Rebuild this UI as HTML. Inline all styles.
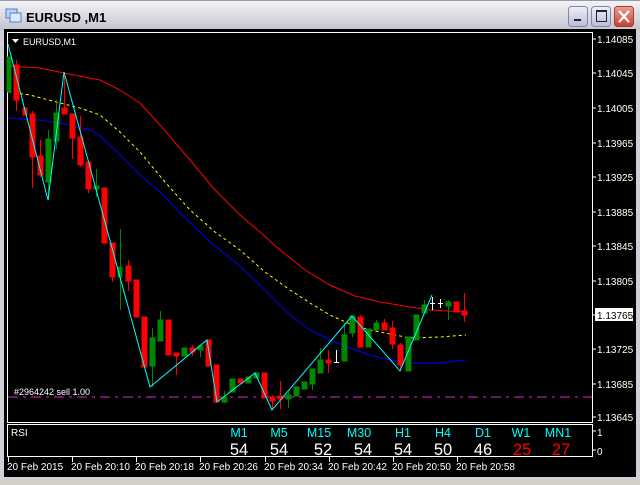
<!DOCTYPE html>
<html><head><meta charset="utf-8"><style>
body{margin:0;width:640px;height:480px;overflow:hidden;background:#d4d0c8;font-family:"Liberation Sans",sans-serif}
</style></head><body>
<svg width="640" height="480" viewBox="0 0 640 480" xmlns="http://www.w3.org/2000/svg" font-family="Liberation Sans, sans-serif">
<defs>
<linearGradient id="tb" x1="0" y1="0" x2="0" y2="1"><stop offset="0" stop-color="#f4f4f8"/><stop offset="0.5" stop-color="#dcdce4"/><stop offset="1" stop-color="#c4c4d0"/></linearGradient>
<linearGradient id="bt" x1="0" y1="0" x2="0" y2="1"><stop offset="0" stop-color="#f0f0f8"/><stop offset="1" stop-color="#b8bcd4"/></linearGradient>
<linearGradient id="cl" x1="0" y1="0" x2="0" y2="1"><stop offset="0" stop-color="#f0a090"/><stop offset="1" stop-color="#c84030"/></linearGradient>
</defs>
<rect x="0" y="0" width="640" height="480" fill="#cfcfd8"/>
<rect x="0" y="0" width="640" height="30" fill="url(#tb)"/>
<rect x="0" y="0" width="640" height="1" fill="#9898a8"/>
<rect x="6" y="9" width="11" height="9" fill="#bcd4f4" stroke="#5080c0"/>
<rect x="10" y="13" width="11" height="9" fill="#dce8fc" stroke="#5080c0"/>
<text x="26" y="22" font-size="13" font-weight="bold" fill="#000">EURUSD ,M1</text>
<rect x="568.5" y="6.5" width="19" height="20" rx="3" fill="url(#bt)" stroke="#8088a8"/>
<rect x="574" y="19" width="7" height="2" fill="#202040"/>
<rect x="591.5" y="6.5" width="19" height="20" rx="3" fill="url(#bt)" stroke="#8088a8"/>
<rect x="596.5" y="10.5" width="10" height="11" fill="none" stroke="#202040"/><rect x="596" y="10" width="11" height="2" fill="#202040"/>
<rect x="614.5" y="6.5" width="19" height="20" rx="3" fill="url(#cl)" stroke="#a04038"/>
<path d="M619 11 L629 22 M629 11 L619 22" stroke="#fff" stroke-width="2.2"/>
<rect x="4" y="29" width="632" height="448" fill="#000"/>
<rect x="7.5" y="32.5" width="585" height="390" fill="none" stroke="#fff"/>
<rect x="7.5" y="424.5" width="585" height="32" fill="none" stroke="#fff"/>
<g fill="#fff" font-size="10">
<text x="597" y="43">1.14085</text><text x="597" y="77">1.14045</text><text x="597" y="112">1.14005</text><text x="597" y="147">1.13965</text><text x="597" y="181">1.13925</text><text x="597" y="216">1.13885</text><text x="597" y="250">1.13845</text><text x="597" y="285">1.13805</text><text x="597" y="353">1.13725</text><text x="597" y="388">1.13685</text><text x="597" y="421">1.13645</text>
<text x="597" y="436">1</text><text x="597" y="455">0</text>
</g>
<g stroke="#fff"><path d="M593 39h3M593 73h3M593 108h3M593 143h3M593 177h3M593 212h3M593 246h3M593 281h3M593 315h3M593 349h3M593 384h3M593 417h3M593 431h3M593 450h3"/></g>
<rect x="595" y="308" width="38" height="13" fill="#fff"/><text x="597" y="319" font-size="10" fill="#000">1.13765</text>
<polyline fill="none" stroke="#f00" points="8,66 40,68 64,73 100,80 120,90 140,103 160,125 190,160 215,190 240,215 260,232 280,250 305,270 330,285 355,296 380,302 410,307 430,310 466,312"/>
<polyline fill="none" stroke="#ff0" stroke-dasharray="3,3" points="8,92 30,95 60,103 80,108 100,115 120,132 140,152 165,182 190,210 215,232 240,250 265,272 290,290 310,303 330,315 350,324 370,330 390,334 410,338 440,337 466,335"/>
<polyline fill="none" stroke="#00f" points="8,118 40,120 70,125 90,130 100,136 115,150 140,175 160,192 180,213 210,242 240,266 265,290 290,315 310,330 330,340 350,348 370,355 390,360 410,363 440,363 466,360"/>
<line x1="8" y1="397" x2="592" y2="397" stroke="#e020e0" stroke-dasharray="10,5,3,5"/>
<text x="14" y="395" font-size="9" fill="#fff">#2964242 sell 1.00</text>
<g stroke-width="1">
<g fill="#080" stroke="#080">
<rect x="7" y="57" width="4" height="35"/>
<line x1="48.5" y1="130" x2="48.5" y2="200"/><rect x="46" y="139" width="5" height="43"/>
<line x1="56.5" y1="100" x2="56.5" y2="149"/><rect x="54" y="113" width="5" height="28"/>
<line x1="96.5" y1="169" x2="96.5" y2="197"/><rect x="94" y="186" width="5" height="3"/>
<line x1="120.5" y1="229" x2="120.5" y2="310"/><rect x="118" y="267" width="4" height="10"/>
<line x1="152.5" y1="328" x2="152.5" y2="387"/><rect x="150" y="338" width="5" height="28"/>
<line x1="160.5" y1="311" x2="160.5" y2="341"/><rect x="158" y="320" width="5" height="21"/>
<rect x="182" y="348" width="5" height="8"/>
<line x1="200.5" y1="346" x2="200.5" y2="357"/><rect x="198" y="346" width="5" height="4"/>
<line x1="224.5" y1="391" x2="224.5" y2="403"/><rect x="222" y="397" width="5" height="5"/>
<rect x="230" y="379" width="5" height="13"/>
<rect x="246" y="377" width="5" height="6"/>
<rect x="254" y="373" width="5" height="5"/>
<line x1="288.5" y1="392" x2="288.5" y2="408"/><rect x="286" y="395" width="5" height="4"/>
<rect x="294" y="387" width="5" height="9"/>
<rect x="302" y="382" width="5" height="7"/>
<line x1="312.5" y1="369" x2="312.5" y2="390"/><rect x="310" y="369" width="5" height="15"/>
<line x1="320.5" y1="348" x2="320.5" y2="373"/><rect x="318" y="360" width="5" height="13"/>
<line x1="344.5" y1="323" x2="344.5" y2="361"/><rect x="342" y="335" width="5" height="26"/>
<line x1="352.5" y1="316" x2="352.5" y2="337"/><rect x="350" y="316" width="5" height="17"/>
<rect x="366" y="329" width="5" height="18"/>
<line x1="376.5" y1="320" x2="376.5" y2="330"/><rect x="374" y="323" width="5" height="7"/>
<rect x="406" y="337" width="5" height="34"/>
<rect x="414" y="315" width="5" height="25"/>
<line x1="424.5" y1="300" x2="424.5" y2="313"/><rect x="422" y="305" width="5" height="8"/>
<line x1="448.5" y1="300" x2="448.5" y2="320"/><rect x="446" y="302" width="5" height="4"/>
</g>
<g fill="#f00" stroke="#f00">
<line x1="16.5" y1="60" x2="16.5" y2="111"/><rect x="14" y="65" width="5" height="35"/>
<rect x="23" y="108" width="4" height="7"/>
<line x1="32.5" y1="111" x2="32.5" y2="188"/><rect x="30" y="114" width="5" height="43"/>
<line x1="40.5" y1="140" x2="40.5" y2="177"/><rect x="38" y="156" width="5" height="19"/>
<line x1="64.5" y1="72" x2="64.5" y2="114"/><rect x="62" y="108" width="5" height="6"/>
<line x1="72.5" y1="114" x2="72.5" y2="159"/><rect x="70" y="114" width="5" height="24"/>
<line x1="80.5" y1="116" x2="80.5" y2="167"/><rect x="78" y="137" width="5" height="28"/>
<line x1="88.5" y1="162" x2="88.5" y2="193"/><rect x="86" y="162" width="5" height="27"/>
<rect x="102" y="188" width="5" height="55"/>
<line x1="112.5" y1="243" x2="112.5" y2="282"/><rect x="110" y="243" width="5" height="34"/>
<line x1="128.5" y1="260" x2="128.5" y2="291"/><rect x="126" y="266" width="5" height="15"/>
<rect x="134" y="280" width="5" height="37"/>
<line x1="144.5" y1="317" x2="144.5" y2="368"/><rect x="142" y="317" width="5" height="50"/>
<rect x="166" y="320" width="5" height="35"/>
<line x1="176.5" y1="353" x2="176.5" y2="375"/><rect x="174" y="353" width="5" height="3"/>
<line x1="192.5" y1="345" x2="192.5" y2="356"/><rect x="190" y="348" width="5" height="4"/>
<rect x="206" y="340" width="5" height="26"/>
<rect x="214" y="365" width="5" height="37"/>
<rect x="238" y="379" width="5" height="4"/>
<rect x="262" y="373" width="5" height="25"/>
<line x1="272.5" y1="395" x2="272.5" y2="410"/><rect x="270" y="397" width="5" height="4"/>
<line x1="280.5" y1="381" x2="280.5" y2="409"/><rect x="278" y="396" width="5" height="3"/>
<line x1="328.5" y1="350" x2="328.5" y2="373"/><rect x="326" y="360" width="5" height="3"/>
<line x1="360.5" y1="315" x2="360.5" y2="347"/><rect x="358" y="317" width="5" height="30"/>
<line x1="384.5" y1="319" x2="384.5" y2="330"/><rect x="382" y="323" width="5" height="7"/>
<line x1="392.5" y1="321" x2="392.5" y2="349"/><rect x="390" y="328" width="5" height="16"/>
<line x1="400.5" y1="343" x2="400.5" y2="371"/><rect x="398" y="345" width="5" height="20"/>
<rect x="454" y="302" width="5" height="10"/>
<line x1="464.5" y1="293" x2="464.5" y2="322"/><rect x="462" y="311" width="5" height="4"/>
</g>
<g stroke="#fff"><path d="M336.5 350v13M334 362.5h5M432.5 297v13M430 303.5h5M440.5 299v9M438 303.5h5"/></g>
</g>
<polyline fill="none" stroke="#0ff" points="8,44 48,200 64,72 150,387 207,340 217,402 255,373 272,410 352,316 400,371 432,295"/>
<path d="M12 39h7l-3.5 4z" fill="#fff"/>
<text x="23" y="45" font-size="9" fill="#fff">EURUSD,M1</text>
<text x="11" y="436" font-size="10" fill="#fff">RSI</text>
<g font-size="12.5" fill="#0ff" text-anchor="middle">
<text x="239" y="437">M1</text><text x="279" y="437">M5</text><text x="319" y="437">M15</text><text x="359" y="437">M30</text><text x="403" y="437">H1</text><text x="443" y="437">H4</text><text x="483" y="437">D1</text><text x="521" y="437">W1</text><text x="558" y="437">MN1</text>
</g>
<g font-size="16.5" fill="#fff" text-anchor="middle">
<text x="239" y="455">54</text><text x="279" y="455">54</text><text x="323" y="455">52</text><text x="363" y="455">54</text><text x="403" y="455">54</text><text x="443" y="455">50</text><text x="483" y="455">46</text>
<text x="522" y="455" fill="#f00">25</text><text x="561" y="455" fill="#f00">27</text>
</g>
<g stroke="#fff"><path d="M8.5 457v5M72.5 457v5M136.5 457v5M200.5 457v5M265.5 457v5M329.5 457v5M393.5 457v5M457.5 457v5"/></g>
<g font-size="10" fill="#fff">
<text x="7" y="470">20 Feb 2015</text><text x="71" y="470">20 Feb 20:10</text><text x="135" y="470">20 Feb 20:18</text><text x="199" y="470">20 Feb 20:26</text><text x="264" y="470">20 Feb 20:34</text><text x="328" y="470">20 Feb 20:42</text><text x="392" y="470">20 Feb 20:50</text><text x="456" y="470">20 Feb 20:58</text>
</g>
</svg>
</body></html>
